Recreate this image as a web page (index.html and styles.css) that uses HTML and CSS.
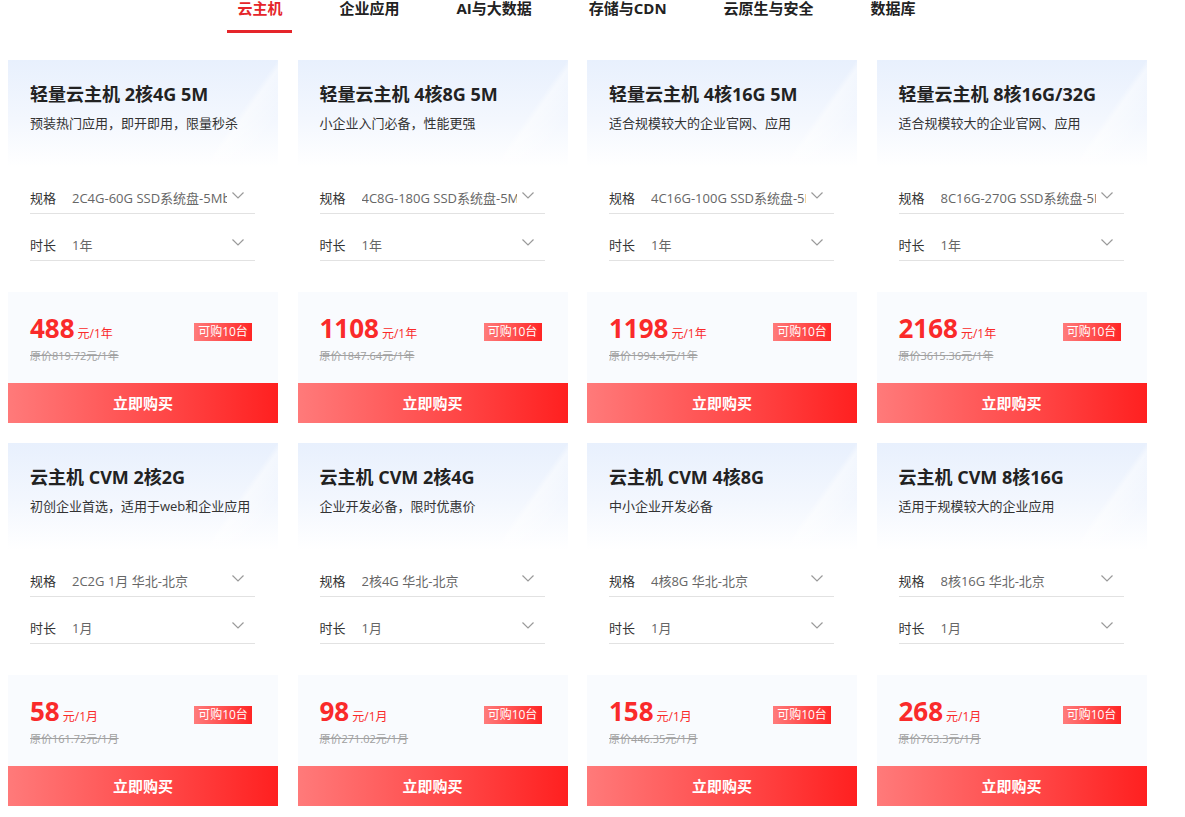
FILE: index.html
```html
<!DOCTYPE html>
<html lang="zh-CN">
<head>
    <meta charset="UTF-8">
    <meta name="viewport" content="width=device-width, initial-scale=1.0">
    <title>云产品特惠</title>
    <link rel="stylesheet" href="styles.css">
</head>
<body>
    <div class="contenedor">
        <ul class="tabs">
            <li class="tab activo">云主机</li>
            <li class="tab">企业应用</li>
            <li class="tab">AI与大数据</li>
            <li class="tab">存储与CDN</li>
            <li class="tab">云原生与安全</li>
            <li class="tab">数据库</li>
        </ul>

        <div class="tarjetas" id="tarjetas"></div>
    </div>

    <script>
        const productos = [
            {titulo: "轻量云主机 2核4G 5M", desc: "预装热门应用，即开即用，限量秒杀", spec: "2C4G-60G SSD系统盘-5Mbps", plazo: "1年", precio: "488", unidad: "元/1年", original: "原价819.72元/1年"},
            {titulo: "轻量云主机 4核8G 5M", desc: "小企业入门必备，性能更强", spec: "4C8G-180G SSD系统盘-5Mbps", plazo: "1年", precio: "1108", unidad: "元/1年", original: "原价1847.64元/1年"},
            {titulo: "轻量云主机 4核16G 5M", desc: "适合规模较大的企业官网、应用", spec: "4C16G-100G SSD系统盘-5Mbps", plazo: "1年", precio: "1198", unidad: "元/1年", original: "原价1994.4元/1年"},
            {titulo: "轻量云主机 8核16G/32G", desc: "适合规模较大的企业官网、应用", spec: "8C16G-270G SSD系统盘-5Mbps", plazo: "1年", precio: "2168", unidad: "元/1年", original: "原价3615.36元/1年"},
            {titulo: "云主机 CVM 2核2G", desc: "初创企业首选，适用于web和企业应用", spec: "2C2G 1月 华北-北京", plazo: "1月", precio: "58", unidad: "元/1月", original: "原价161.72元/1月"},
            {titulo: "云主机 CVM 2核4G", desc: "企业开发必备，限时优惠价", spec: "2核4G 华北-北京", plazo: "1月", precio: "98", unidad: "元/1月", original: "原价271.02元/1月"},
            {titulo: "云主机 CVM 4核8G", desc: "中小企业开发必备", spec: "4核8G 华北-北京", plazo: "1月", precio: "158", unidad: "元/1月", original: "原价446.35元/1月"},
            {titulo: "云主机 CVM 8核16G", desc: "适用于规模较大的企业应用", spec: "8核16G 华北-北京", plazo: "1月", precio: "268", unidad: "元/1月", original: "原价763.3元/1月"}
        ];

        const flecha = '<svg class="flecha" width="12" height="7" viewBox="0 0 12 7"><polyline points="0.5,0.5 6,6 11.5,0.5" fill="none" stroke="#9a9a9a" stroke-width="1.2"/></svg>';

        function crearTarjeta(p) {
            return `
            <div class="tarjeta">
                <div class="cabecera">
                    <h3 class="titulo">${p.titulo}</h3>
                    <p class="desc">${p.desc}</p>
                </div>
                <div class="opciones">
                    <div class="fila"><span class="etiqueta">规格</span><span class="valor">${p.spec}</span>${flecha}</div>
                    <div class="fila"><span class="etiqueta">时长</span><span class="valor">${p.plazo}</span>${flecha}</div>
                </div>
                <div class="precio-caja">
                    <div class="precios">
                        <div class="precio"><span class="numero">${p.precio}</span><span class="unidad">${p.unidad}</span></div>
                        <div class="original">${p.original}</div>
                    </div>
                    <span class="etiqueta-stock">可购10台</span>
                </div>
                <div class="comprar">立即购买</div>
            </div>`;
        }

        document.getElementById("tarjetas").innerHTML = productos.map(crearTarjeta).join("");
    </script>
</body>
</html>
```

FILE: styles.css
```css
body {
    margin: 0;
    background-color: white;
    font-family: "Open Sans", "Noto Sans CJK SC", sans-serif;
    color: #333;
    overflow: hidden;
}
.contenedor {
    width: 1140px;
    padding: 0 8px;
}

.tabs {
    display: flex;
    justify-content: center;
    gap: 57px;
    list-style: none;
    margin: 0 0 27px 0;
    padding: 0 3px 0 0;
    height: 33px;
}
.tab {
    position: relative;
    font-size: 15px;
    line-height: 17px;
    font-weight: bold;
    color: #222;
    white-space: nowrap;
}
.tab.activo {
    color: #e5252a;
}
.tab.activo::after {
    content: "";
    position: absolute;
    left: -10px;
    right: -10px;
    top: 30px;
    height: 3px;
    background-color: #e5252a;
}

.tarjetas {
    display: grid;
    grid-template-columns: repeat(4, 270px);
    column-gap: 19.5px;
    row-gap: 20px;
}
.tarjeta {
    display: flex;
    flex-direction: column;
}
.cabecera {
    height: 107px;
    box-sizing: border-box;
    padding: 22px 22px 0 22px;
    background:
        linear-gradient(125deg, transparent 78%, rgba(255, 255, 255, 0.45) 80%, transparent 90%),
        linear-gradient(180deg, #e8f0fd 0%, #f3f7fe 55%, #ffffff 100%);
}
.titulo {
    margin: 0;
    font-size: 18px;
    line-height: 24px;
    font-weight: bold;
    color: #222;
    white-space: nowrap;
}
.desc {
    margin: 7px 0 0 0;
    font-size: 13px;
    line-height: 20px;
    color: #333;
}
.opciones {
    padding: 0 23px 0 22px;
}
.fila {
    display: flex;
    align-items: center;
    height: 47px;
    box-sizing: border-box;
    padding-top: 14px;
    border-bottom: 1px solid #e2e2e2;
    font-size: 13px;
}
.etiqueta {
    width: 42px;
    flex-shrink: 0;
    color: #333;
}
.valor {
    flex: 1;
    overflow: hidden;
    white-space: nowrap;
    color: #666;
    margin-right: 5px;
}
.flecha {
    flex-shrink: 0;
    margin-right: 11px;
    margin-top: -3px;
}

.precio-caja {
    margin-top: 31px;
    height: 91px;
    box-sizing: border-box;
    padding: 21px 26px 0 22px;
    background-color: #f9fbfe;
    display: flex;
    justify-content: space-between;
    align-items: flex-start;
}
.precio {
    line-height: 30px;
    color: #fa2a2a;
    white-space: nowrap;
}
.numero {
    font-size: 26px;
    font-weight: bold;
}
.unidad {
    font-size: 12px;
    margin-left: 3px;
}
.original {
    margin-top: -1px;
    font-size: 11px;
    line-height: 16px;
    color: #a0a0a0;
    text-decoration: line-through;
}
.etiqueta-stock {
    margin-top: 10px;
    width: 58px;
    height: 18px;
    line-height: 18px;
    text-align: center;
    font-size: 12px;
    color: white;
    background: linear-gradient(90deg, #ff7b7b, #ff2525);
}
.comprar {
    height: 40px;
    line-height: 40px;
    text-align: center;
    font-size: 15px;
    font-weight: bold;
    color: white;
    background: linear-gradient(90deg, #ff7a7a 0%, #ff4a4a 55%, #ff2020 100%);
    cursor: pointer;
}
```
